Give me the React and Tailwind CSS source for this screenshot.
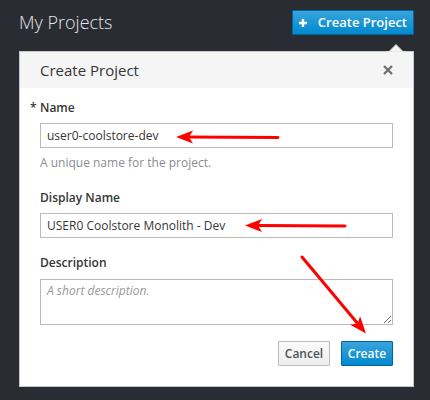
import React from "react";

function Arrow({ x1, y1, x2, y2 }) {
  const dx = x2 - x1;
  const dy = y2 - y1;
  const len = Math.hypot(dx, dy);
  const ux = dx / len;
  const uy = dy / len;
  const hl = 17;
  const hw = 6.5;
  const bx = x2 - ux * hl;
  const by = y2 - uy * hl;
  const px = -uy;
  const py = ux;
  const lx = x2 - ux * (hl - 4);
  const ly = y2 - uy * (hl - 4);
  const pts = `${x2},${y2} ${bx + px * hw},${by + py * hw} ${lx},${ly} ${bx - px * hw},${by - py * hw}`;
  return (
    <g>
      <line x1={x1} y1={y1} x2={lx} y2={ly} stroke="#ff0000" strokeWidth="3" strokeLinecap="round" />
      <polygon points={pts} fill="#ff0000" />
    </g>
  );
}

export default function App() {
  return (
    <div className="relative w-[430px] h-[400px] overflow-hidden bg-[#292d33] font-['Open_Sans',sans-serif]">
      {/* top bar */}
      <div className="flex items-center justify-between pl-[19px] pr-[16px] pt-[10px] h-[35px]">
        <h1 className="text-[18px] font-light text-[#e6e6e6] leading-[25px]">My Projects</h1>
        <button className="flex items-center h-[25px] pl-[6px] pr-[6px] gap-[11px] rounded-[1px] border border-[#00659c] bg-[linear-gradient(#39a5dc,#0088ce)] text-white text-[13px] font-semibold leading-none">
          <svg width="8" height="8" viewBox="0 0 8 8">
            <path d="M4 0v8M0 4h8" stroke="#fff" strokeWidth="2.4" />
          </svg>
          <span>Create Project</span>
        </button>
      </div>

      {/* panel */}
      <div className="mt-[16px] ml-[19px] w-[395px] border border-[#c6c6c6] bg-white">
        <div className="flex items-center justify-between h-[36px] bg-[#f5f5f5] pl-[20px] pr-[20px]">
          <span className="text-[15px] text-[#363636] leading-none">Create Project</span>
          <svg width="10" height="10" viewBox="0 0 10 10">
            <path d="M1 1l8 8M9 1l-8 8" stroke="#707070" strokeWidth="2.4" />
          </svg>
        </div>
        <div className="pt-[10px] px-[20px] pb-[20px]">
          {/* Name */}
          <div className="mb-[16px]">
            <label className="block h-[20px] leading-[20px] mb-[5px] text-[12px] font-semibold text-[#363636] ml-[-10px]">
              <span className="inline-block w-[10px]">*</span>Name
            </label>
            <input
              readOnly
              value="user0-coolstore-dev"
              className="block w-full h-[25px] border border-[#bbbbbb] px-[6px] text-[12px] text-[#363636] outline-none bg-white"
            />
            <div className="mt-[6px] h-[18px] leading-[18px] text-[12px] text-[#8b8d8f]">A unique name for the project.</div>
          </div>
          {/* Display Name */}
          <div className="mb-[15px]">
            <label className="block h-[20px] leading-[20px] mb-[5px] text-[12px] font-semibold text-[#363636]">Display Name</label>
            <input
              readOnly
              value="USER0 Coolstore Monolith - Dev"
              className="block w-full h-[25px] border border-[#bbbbbb] px-[6px] text-[12px] text-[#363636] outline-none bg-white"
            />
          </div>
          {/* Description */}
          <div className="mb-[16px]">
            <label className="block h-[20px] leading-[20px] mb-[6px] text-[12px] font-semibold text-[#363636]">Description</label>
            <textarea
              readOnly
              placeholder="A short description."
              className="block w-full h-[46px] border border-[#bbbbbb] px-[6px] py-[2px] text-[12px] text-[#363636] outline-none bg-white placeholder:italic placeholder:text-[#999999] resize-y"
            />
          </div>
          <div className="flex justify-end gap-[11px]">
            <button className="flex items-center justify-center w-[52px] h-[25px] rounded-[1px] border border-[#bbbbbb] bg-[linear-gradient(#fafafa,#ededed)] text-[12px] font-semibold text-[#4d5258] leading-none">
              Cancel
            </button>
            <button className="flex items-center justify-center w-[52px] h-[25px] rounded-[1px] border border-[#00659c] bg-[linear-gradient(#39a5dc,#0088ce)] text-[12px] font-semibold text-white leading-none">
              Create
            </button>
          </div>
        </div>
      </div>

      {/* popover caret */}
      <svg className="absolute left-[386px] top-[43px]" width="20" height="10" viewBox="0 0 20 10">
        <polygon points="2.5,9 10,1.5 17.5,9" fill="#f5f5f5" stroke="#c6c6c6" strokeWidth="1" />
        <rect x="0" y="8.5" width="20" height="2" fill="#f5f5f5" />
      </svg>

      {/* red annotation arrows */}
      <svg className="absolute inset-0 pointer-events-none" width="430" height="400" viewBox="0 0 430 400">
        <Arrow x1={278} y1={137.5} x2={176} y2={137} />
        <Arrow x1={345} y1={226} x2={245} y2={225.5} />
        <Arrow x1={302} y1={257} x2={366} y2={333.5} />
      </svg>
    </div>
  );
}
